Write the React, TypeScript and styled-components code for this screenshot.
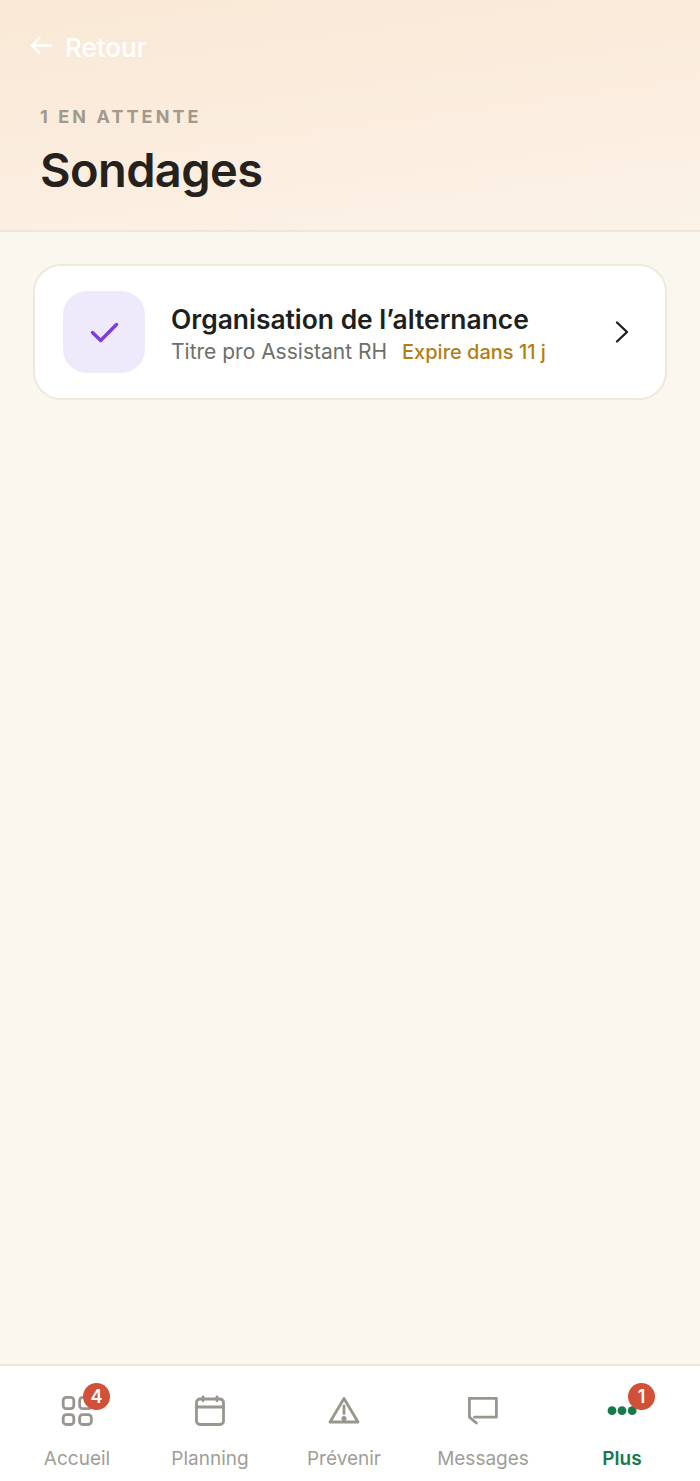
import React from 'react';
import styled, { createGlobalStyle } from 'styled-components';

const GlobalStyle = createGlobalStyle`
  html, body {
    margin: 0;
    padding: 0;
    background: #faf7ef;
  }
  * {
    box-sizing: border-box;
  }
`;

const BackArrow = () => (
  <svg width="24" height="24" viewBox="0 0 24 24" fill="none" stroke="#fff" strokeWidth="2.4" strokeLinecap="round" strokeLinejoin="round">
    <path d="M22 10.5H3" />
    <path d="M10.5 3 3 10.5l7.5 7.5" />
  </svg>
);

const CheckIcon = () => (
  <svg width="32" height="26" viewBox="0 0 32 26" fill="none" stroke="#7c3bdf" strokeWidth="3.4" strokeLinecap="round" strokeLinejoin="round">
    <path d="M4.5 13.5 12.7 21.5 28.5 5.5" />
  </svg>
);

const ChevronIcon = () => (
  <svg width="16" height="24" viewBox="0 0 16 24" fill="none" stroke="#1f1f1f" strokeWidth="2.4" strokeLinecap="round" strokeLinejoin="round">
    <path d="M3 2.5 13 12 3 21.5" />
  </svg>
);

const GridIcon = () => (
  <svg width="34" height="34" viewBox="0 0 34 34" fill="none" stroke="#98968d" strokeWidth="2.8">
    <rect x="3.2" y="2.4" width="10.6" height="11.2" rx="3" />
    <rect x="19.6" y="2.4" width="11.7" height="11.2" rx="3" />
    <rect x="3.2" y="19.7" width="10.6" height="9.8" rx="3" />
    <rect x="19.6" y="19.7" width="11.7" height="9.8" rx="3" />
  </svg>
);

const CalendarIcon = () => (
  <svg width="34" height="34" viewBox="0 0 34 34" fill="none" stroke="#98968d" strokeWidth="2.8" strokeLinecap="round">
    <rect x="3.5" y="4" width="27" height="25.5" rx="3.5" />
    <path d="M3.5 12h27" />
    <path d="M10 1.8v4" />
    <path d="M24 1.8v4" />
  </svg>
);

const WarningIcon = () => (
  <svg width="34" height="34" viewBox="0 0 34 34" fill="none" stroke="#98968d" strokeWidth="2.8" strokeLinejoin="round" strokeLinecap="round">
    <path d="M17 3.5 3 27h28z" />
    <path d="M17 11v7.5" />
    <circle cx="17" cy="23.5" r="1.2" fill="#98968d" />
  </svg>
);

const MessageIcon = () => (
  <svg width="34" height="34" viewBox="0 0 34 34" fill="none" stroke="#98968d" strokeWidth="2.8" strokeLinejoin="round" strokeLinecap="round">
    <path d="M3.4 3.4h27v18.8H8.5" />
    <path d="M3.4 3.4v18.8l7 5.8" />
  </svg>
);

const DotsIcon = () => (
  <svg width="34" height="34" viewBox="0 0 34 34" fill="#177a4a">
    <circle cx="7" cy="15.7" r="4.4" />
    <circle cx="17" cy="15.7" r="4.4" />
    <circle cx="27.2" cy="15.7" r="4.4" />
  </svg>
);

const tabs = [
  { label: 'Accueil', icon: <GridIcon />, badge: '4' },
  { label: 'Planning', icon: <CalendarIcon /> },
  { label: 'Prévenir', icon: <WarningIcon /> },
  { label: 'Messages', icon: <MessageIcon /> },
  { label: 'Plus', icon: <DotsIcon />, badge: '1', active: true },
];

const App = () => {
  return (
    <Page>
      <GlobalStyle />
      <Header>
        <BackLink>
          <BackArrow />
          <span>Retour</span>
        </BackLink>
        <Eyebrow>1 EN ATTENTE</Eyebrow>
        <Title>Sondages</Title>
      </Header>
      <Content>
        <Card>
          <IconBox>
            <CheckIcon />
          </IconBox>
          <CardText>
            <CardTitle>Organisation de l’alternance</CardTitle>
            <CardMeta>
              <span>Titre pro Assistant RH</span>
              <Expiry>Expire dans 11 j</Expiry>
            </CardMeta>
          </CardText>
          <ChevronIcon />
        </Card>
      </Content>
      <TabBar>
        {tabs.map((tab) => (
          <Tab key={tab.label}>
            <TabIcon>
              {tab.icon}
              {tab.badge && <Badge>{tab.badge}</Badge>}
            </TabIcon>
            <TabLabel $active={tab.active}>{tab.label}</TabLabel>
          </Tab>
        ))}
      </TabBar>
    </Page>
  );
};

export default App;

const Page = styled.div`
  width: 700px;
  height: 1481px;
  display: flex;
  flex-direction: column;
  background: #faf7ef;
  font-family: Inter, 'Noto Sans', sans-serif;
  overflow: hidden;
`;

const Header = styled.header`
  height: 232px;
  padding: 31px 40px 0;
  background: linear-gradient(172deg, #f9e8d5 0%, #fbeddf 55%, #fbf3e8 100%);
  border-bottom: 2px solid #ece7dc;
`;

const BackLink = styled.div`
  display: flex;
  align-items: center;
  gap: 12px;
  margin-left: -11px;
  height: 32px;
  color: #fff;
  font-size: 26px;
  font-weight: 500;
`;

const Eyebrow = styled.div`
  margin-top: 42px;
  height: 24px;
  line-height: 24px;
  font-size: 18px;
  font-weight: 700;
  letter-spacing: 3.1px;
  color: #a09a8b;
`;

const Title = styled.h1`
  margin: 13px 0 0;
  font-size: 47px;
  line-height: 56px;
  font-weight: 600;
  letter-spacing: -0.6px;
  color: #25211c;
`;

const Content = styled.main`
  flex: 1;
  padding: 32px 33px 0;
`;

const Card = styled.div`
  height: 136px;
  display: flex;
  align-items: center;
  padding: 0 35px 0 28px;
  background: #fff;
  border: 2px solid #efe9dd;
  border-radius: 28px;
`;

const IconBox = styled.div`
  width: 82px;
  height: 82px;
  flex: none;
  display: flex;
  align-items: center;
  justify-content: center;
  border-radius: 24px;
  background: #efe9fc;
`;

const CardText = styled.div`
  flex: 1;
  margin-left: 26px;
  padding-top: 5px;
`;

const CardTitle = styled.div`
  font-size: 26.4px;
  line-height: 34px;
  font-weight: 600;
  color: #201f1d;
`;

const CardMeta = styled.div`
  display: flex;
  gap: 15px;
  margin-top: 1px;
  font-size: 21px;
  line-height: 30px;
  color: #6f6e69;
`;

const Expiry = styled.span`
  font-size: 20px;
  font-weight: 500;
  color: #b27e12;
`;

const TabBar = styled.nav`
  height: 117px;
  display: grid;
  grid-template-columns: 134px 132px 136px 142px 136px;
  padding: 0 10px;
  background: #fff;
  border-top: 2px solid #ece7dc;
`;

const Tab = styled.div`
  display: flex;
  flex-direction: column;
  align-items: center;
  padding-top: 29px;
`;

const TabIcon = styled.div`
  position: relative;
  width: 34px;
  height: 34px;
`;

const Badge = styled.span`
  position: absolute;
  top: -12px;
  left: 23px;
  width: 27px;
  height: 27px;
  display: flex;
  align-items: center;
  justify-content: center;
  border-radius: 50%;
  background: #d24f38;
  color: #fff;
  font-size: 18px;
  font-weight: 600;
`;

const TabLabel = styled.span<{ $active?: boolean }>`
  margin-top: 17px;
  font-size: 19px;
  line-height: 26px;
  font-weight: ${(p) => (p.$active ? 600 : 400)};
  color: ${(p) => (p.$active ? '#177a4a' : '#a09e96')};
`;
